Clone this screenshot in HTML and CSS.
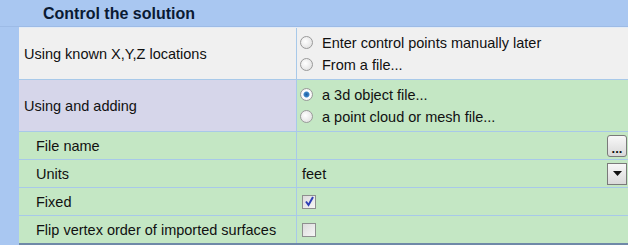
FILE: index.html
```
<!DOCTYPE html>
<html>
  <head>
    <title>Control the solution</title>
    <link rel="stylesheet" href="styles.css">
  </head>
  <body>
    <div class="panel">
      <div class="title">Control the solution</div>
      <div class="grid">
        <div class="cell label plain tall">Using known X,Y,Z locations</div>
        <div class="cell value plain tall">
          <div class="option"><span class="radio"></span>Enter control points manually later</div>
          <div class="option"><span class="radio"></span>From a file...</div>
        </div>

        <div class="cell label group tall">Using and adding</div>
        <div class="cell value green tall">
          <div class="option"><span class="radio checked"></span>a 3d object file...</div>
          <div class="option"><span class="radio"></span>a point cloud or mesh file...</div>
        </div>

        <div class="cell label green sub">File name</div>
        <div class="cell value green row-flex">
          <span class="fill"></span>
          <span class="btn">...</span>
        </div>

        <div class="cell label green sub">Units</div>
        <div class="cell value green row-flex">
          <span class="fill">feet</span>
          <span class="btn drop"><svg width="9" height="5" viewBox="0 0 9 5"><path d="M0 0h9L4.5 5z" fill="#111"/></svg></span>
        </div>

        <div class="cell label green sub">Fixed</div>
        <div class="cell value green">
          <span class="check">
            <svg width="11" height="11" viewBox="0 0 11 11"><path d="M2 5.5L4.5 9L9 1" fill="none" stroke="#2d3fb5" stroke-width="2"/></svg>
          </span>
        </div>

        <div class="cell label green sub">Flip vertex order of imported surfaces</div>
        <div class="cell value green">
          <span class="check"></span>
        </div>
      </div>
    </div>
  </body>
</html>
```

FILE: styles.css
```
body {
  margin: 0;
  padding: 0;
  background-color: #a9c7f1;
  font-family: "Liberation Sans", Arial, sans-serif;
  font-size: 14.5px;
  color: #111;
}
.panel {
  width: 628px;
  height: 245px;
  overflow: hidden;
}
.title {
  height: 27px;
  line-height: 27px;
  padding-left: 43px;
  font-weight: bold;
  font-size: 16px;
  color: #0a1a33;
  border-bottom: 1px solid #9dbbe6;
  box-sizing: border-box;
}
.grid {
  margin-left: 19px;
  display: grid;
  grid-template-columns: 277px 1fr;
  column-gap: 1px;
  row-gap: 1px;
  background-color: #a8c9e9;
  border-top: 1px solid #e4ecf6;
  border-bottom: 3px solid #6f89a8;
}
.cell {
  display: flex;
  align-items: center;
  height: 27px;
  box-sizing: border-box;
}
.cell.tall {
  height: 51px;
}
.label {
  padding-left: 5px;
}
.label.sub {
  padding-left: 17px;
}
.plain {
  background-color: #f0f0f0;
}
.group {
  background-color: #d6d6ea;
}
.green {
  background-color: #c4e7c4;
}
.value {
  padding-left: 3px;
}
.value.tall {
  flex-direction: column;
  align-items: flex-start;
  justify-content: center;
  gap: 2px;
}
.option {
  display: flex;
  align-items: center;
  height: 20px;
}
.radio {
  width: 11px;
  height: 11px;
  border-radius: 50%;
  border: 1px solid #9a9a9a;
  background: radial-gradient(circle at 40% 40%, #ffffff, #dadada);
  margin-right: 9px;
  display: inline-block;
}
.radio.checked {
  background: radial-gradient(circle, #1d5a9e 0, #3e86c9 2.5px, #ffffff 3.5px, #e4e4e4 100%);
}
.row-flex {
  justify-content: space-between;
  padding-right: 1px;
}
.fill {
  padding-left: 2px;
}
.btn {
  width: 20px;
  height: 22px;
  border: 1px solid #7a7a7a;
  border-radius: 3px;
  background: linear-gradient(#f8f8f8, #d9d9d9);
  font-weight: bold;
  font-size: 13px;
  display: flex;
  align-items: center;
  justify-content: center;
  line-height: 1;
  padding-top: 5px;
  box-sizing: border-box;
}
.btn.drop {
  padding-top: 0;
  border-radius: 0;
  height: 22px;
}
.check {
  margin-left: 2px;
  width: 14px;
  height: 14px;
  border: 1px solid #8e8f8f;
  background: linear-gradient(135deg, #dcdcdc, #f6f6f6);
  box-sizing: border-box;
  display: flex;
  align-items: center;
  justify-content: center;
}
```
